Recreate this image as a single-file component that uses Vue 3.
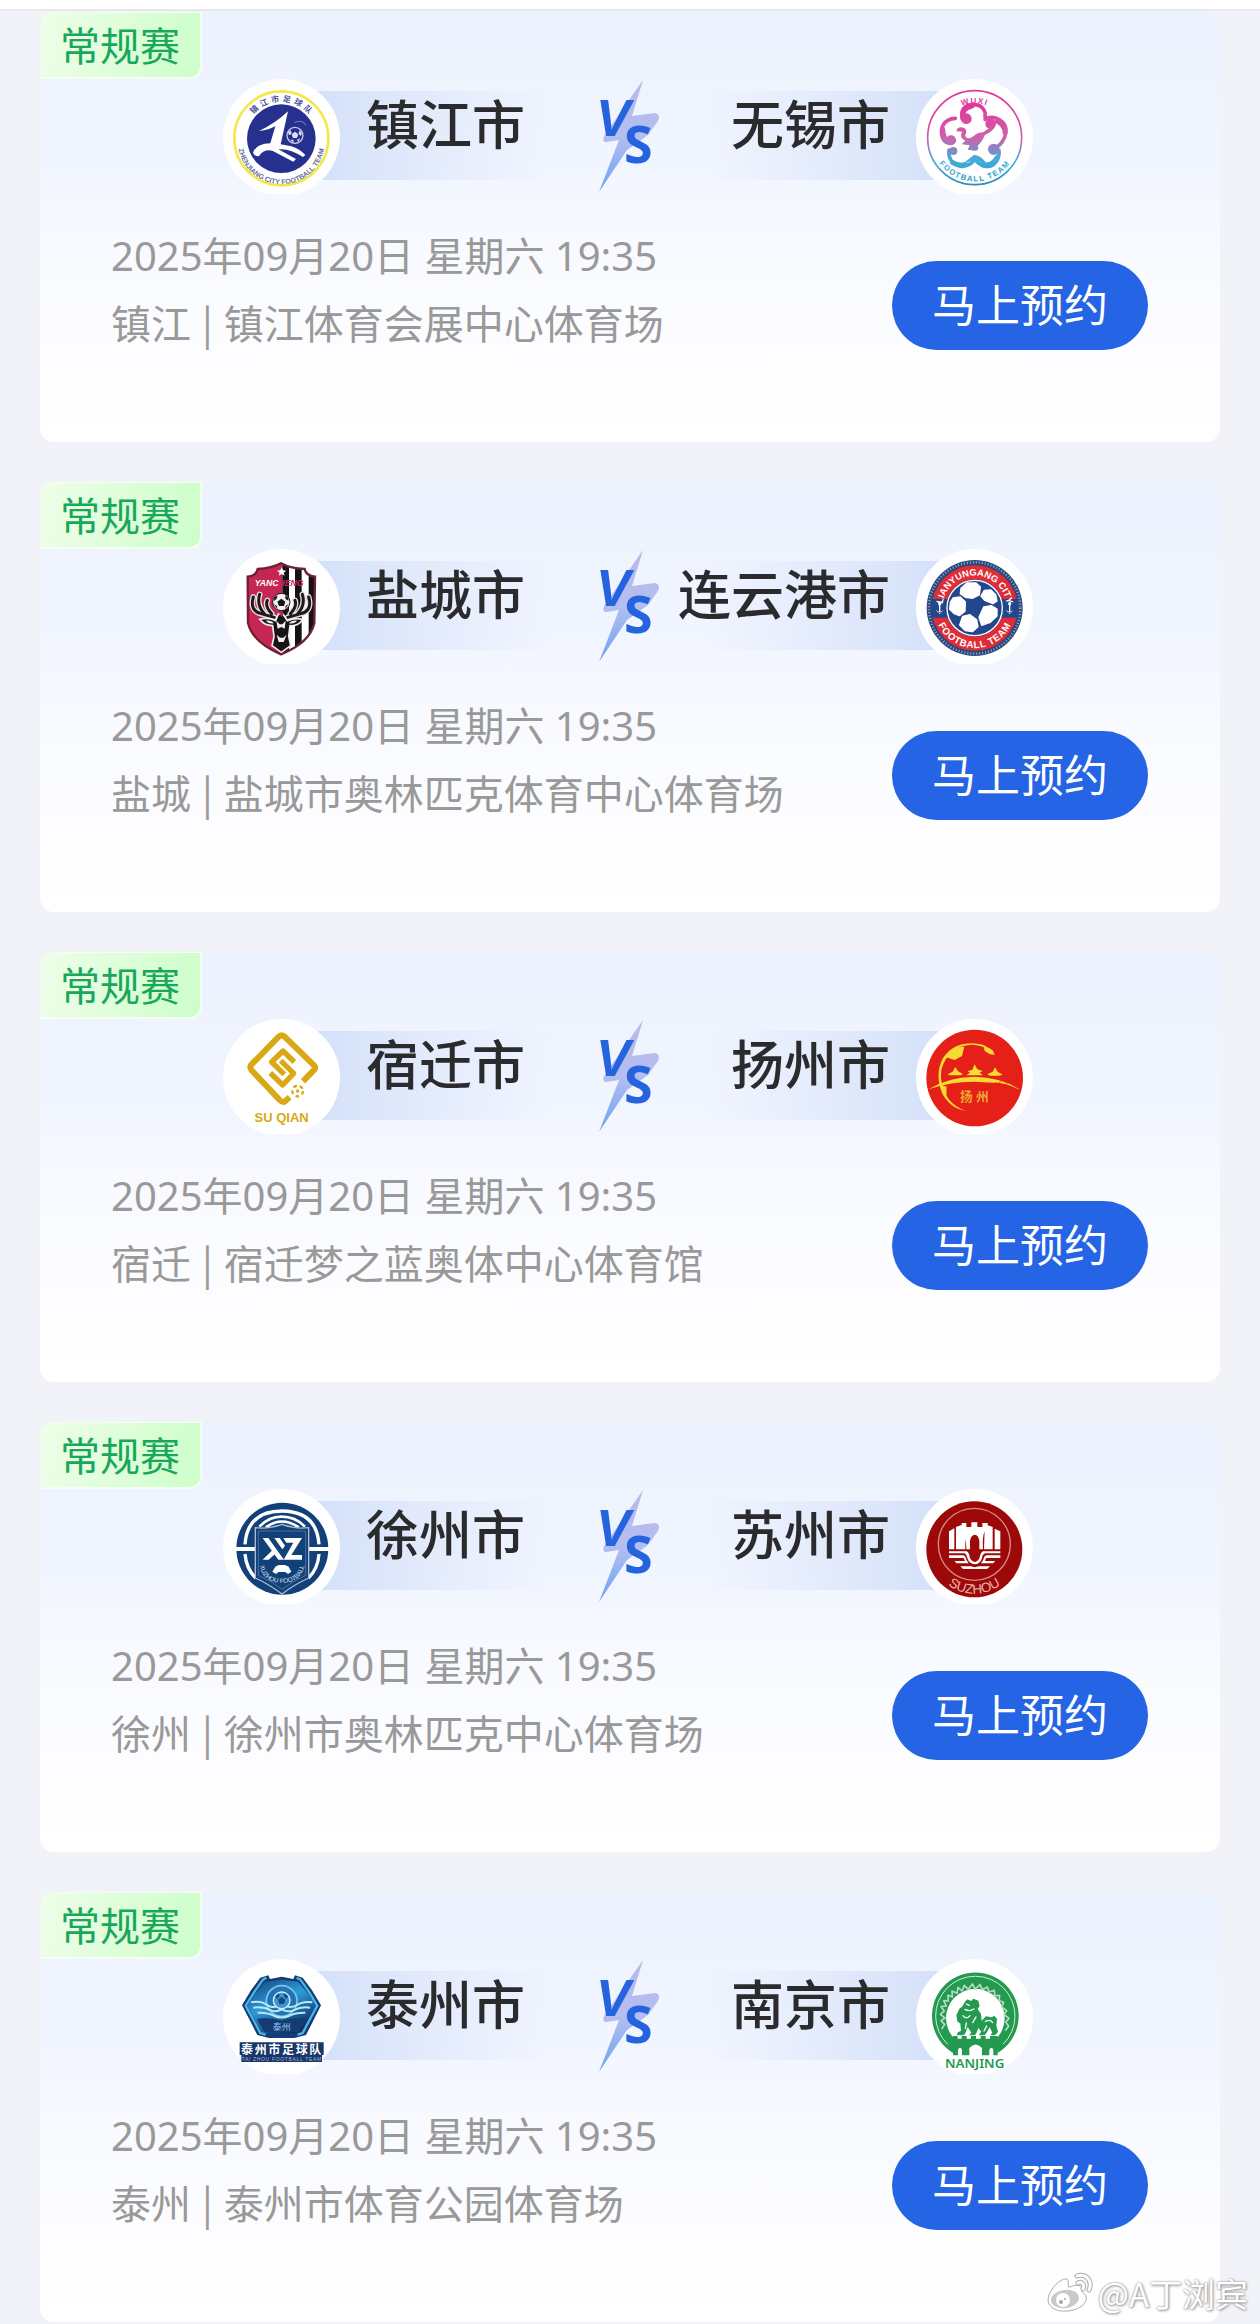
<template>
  <div class="page">
    <header class="top-bar"></header>
    <main class="match-list">
      <article v-for="match in matches" :key="match.home.id" class="match-card">
        <span class="tag">常规赛</span>

        <div class="teams">
          <template v-for="side in ['home', 'away']" :key="side">
            <svg v-if="side === 'away'" class="versus" viewBox="0 0 66 114" role="img" aria-label="VS">
              <defs>
                <linearGradient :id="'bolt-' + match.home.id" x1="0" y1="0" x2="0" y2="1">
                  <stop offset="0" stop-color="#b9b8e8" />
                  <stop offset="0.5" stop-color="#b4bff0" />
                  <stop offset="1" stop-color="#6ba2f5" />
                </linearGradient>
              </defs>
              <path :fill="`url(#bolt-${match.home.id})`" d="M48 1 37 37 60 34Q66 35 63 42L53 56 32 71 4 113 24 61 11 63Q7 63 9 57Z" />
              <text x="1" y="57" class="versus-letter slanted">V</text>
              <text x="29" y="84" class="versus-letter">S</text>
            </svg>

            <div class="team" :class="side">
              <svg class="emblem" :viewBox="side === 'home' ? '24 24 351 345' : '33 24 351 345'" aria-hidden="true">
                <circle :cx="side === 'home' ? 199.5 : 208.5" cy="199.5" r="175.5" fill="#fff" />

                <g v-if="match[side].id === 'zhenjiang'">
                  <circle cx="199" cy="202" r="141" fill="#fff" stroke="#f3e84a" stroke-width="8" />
                  <circle cx="199" cy="203" r="103" fill="#26318f" />
                  <path fill="#fff" d="M132 180Q180 158 219 121L197 220 229 226Q254 234 271 252L264 258Q223 231 190 235L243 264 235 272 172 239Q145 234 132 256 118 256 114 245 123 218 166 217L181 165Q163 177 132 180Z" />
                  <circle cx="240" cy="193" r="24" fill="none" stroke="#c7cae8" stroke-width="4" />
                  <path fill="#dfe1f3" d="M240 182 250 190 246 201H234L230 190ZM219 184 227 178 230 188 222 193ZM253 178 261 186 258 195 251 188ZM226 206 235 206 236 215ZM246 206 256 202 249 213Z" />
                  <path d="M238 154Q265 145 273 163" fill="none" stroke="#7980bd" stroke-width="3" />
                  <path id="zj-top" d="M89 202A110 110 0 0 1 309 202" fill="none" />
                  <path id="zj-bottom" d="M70 186A131 131 0 1 0 328 186" fill="none" />
                  <text font-size="24" font-weight="700" fill="#4a5199" letter-spacing="9" text-anchor="middle"><textPath href="#zj-top" startOffset="51%">镇江市足球队</textPath></text>
                  <text font-size="21" font-weight="700" fill="#6a70a3" text-anchor="middle"><textPath href="#zj-bottom" startOffset="50%">ZHENJIANG CITY FOOTBALL TEAM</textPath></text>
                </g>

                <g v-else-if="match[side].id === 'wuxi'" fill="none" stroke="url(#wx-fill)" stroke-linecap="round">
                  <defs>
                    <linearGradient id="wx-fill" gradientUnits="userSpaceOnUse" x1="0" y1="60" x2="0" y2="340">
                      <stop offset="0.15" stop-color="#e0389b" />
                      <stop offset="0.5" stop-color="#cf61ac" />
                      <stop offset="0.75" stop-color="#3eaedd" />
                      <stop offset="1" stop-color="#2b8fb8" />
                    </linearGradient>
                  </defs>
                  <circle cx="209" cy="200" r="141" stroke-width="5" />
                  <path stroke-width="11" d="M174 145C163 111 188 98 207 101 231 101 243 119 240 136M240 145C268 129 307 151 303 184 300 205 286 227 263 233M151 142C117 143 103 172 112 199 118 216 139 223 148 210M132 237C128 270 151 284 171 286 190 285 205 276 211 260M282 238C285 266 266 289 242 286 228 284 217 276 208 262" />
                  <path stroke-width="15" d="M173 142Q168 111 201 105M277 151Q300 163 300 184M113 175Q115 204 130 211M143 275Q161 286 181 281M234 282Q264 285 276 260" />
                  <g stroke="none" fill="url(#wx-fill)">
                    <circle cx="184" cy="143" r="16" /><circle cx="257" cy="158" r="16" /><circle cx="138" cy="208" r="15" /><circle cx="266" cy="235" r="17" /><circle cx="145" cy="240" r="12" />
                    <path d="M154 181Q158 163 178 171 189 180 180 194 188 209 205 196 220 183 235 184 249 169 269 170 258 184 239 193 231 214 218 224 225 239 208 239L188 236 194 223 170 220 181 209Q161 199 171 182Z" />
                    <path d="M174 278Q196 260 207 252 228 251 248 282 227 277 211 264 193 274 174 278Z" />
                  </g>
                  <path id="wx-top" d="M106 200A103 103 0 0 1 312 200" stroke="none" />
                  <path id="wx-bottom" d="M78 200A131 131 0 0 0 340 200" stroke="none" />
                  <g fill="url(#wx-fill)" stroke="none" text-anchor="middle" font-weight="700">
                    <text font-size="24" letter-spacing="4"><textPath href="#wx-top" startOffset="50%">WUXI</textPath></text>
                    <text font-size="23" letter-spacing="4"><textPath href="#wx-bottom" startOffset="50%">FOOTBALL TEAM</textPath></text>
                  </g>
                </g>

                <g v-else-if="match[side].id === 'yancheng'">
                  <defs>
                    <clipPath id="yc-shield"><path d="M98 107Q124 105 128 84 170 82 198 67 228 83 269 84 273 105 300 107L298 247Q284 306 198 340 113 304 99 246Z" /></clipPath>
                  </defs>
                  <g clip-path="url(#yc-shield)">
                    <path fill="#c52653" d="M90 60H202V345H90Z" />
                    <path fill="#151215" d="M202 60H305V345H202Z" />
                    <path fill="#fff" d="M222 60H240V345H222ZM260 60H281V345H260Z" />
                  </g>
                  <path fill="none" stroke="#702034" stroke-width="7" d="M98 107Q124 105 128 84 170 82 198 67 228 83 269 84 273 105 300 107L298 247Q284 306 198 340 113 304 99 246Z" />
                  <path fill="#fff" d="M200 79 204 88 214 89 206 95 209 104 200 99 191 104 194 95 186 89 196 88Z" />
                  <text x="119" y="134" font-size="26" font-style="italic" font-weight="700" fill="#fff">YANC<tspan fill="#c52653">HENG</tspan></text>
                  <g fill="none" stroke-linecap="round" stroke-linejoin="round">
                    <path stroke="#e6e0e2" stroke-width="17" d="M115 168Q103 209 138 218L178 229M134 160Q124 192 148 218M157 178Q149 196 170 218M281 168Q293 209 258 218L218 229M262 160Q272 192 248 218M240 178Q247 196 226 218" />
                    <path stroke="#1d191c" stroke-width="9" d="M115 168Q103 209 138 218L178 229M134 160Q124 192 148 218M157 178Q149 196 170 218M281 168Q293 209 258 218L218 229M262 160Q272 192 248 218M240 178Q247 196 226 218" />
                  </g>
                  <path fill="#171417" stroke="#eee" stroke-width="5" d="M134 235Q160 228 182 239L190 219 204 219 217 239Q244 228 263 236 249 256 225 254L221 286 227 314 199 334 171 314 177 287 173 254Q148 254 134 235Z" />
                  <path fill="#eee" d="M152 239Q169 237 176 247 162 250 152 239ZM247 239Q230 237 222 247 237 250 247 239ZM184 239 194 250 202 250 212 239 209 263 199 258 188 263ZM185 281 195 290H205L215 281 206 303H191Z" />
                  <path fill="#c52653" d="M192 216H207L200 228Z" />
                  <circle cx="199" cy="183" r="26" fill="#f4f0f1" stroke="#171417" stroke-width="3" />
                  <path fill="#171417" d="M199 173 211 182 207 195H192L187 182ZM178 168 188 164 185 173 177 180ZM211 163 221 171 220 179 211 173ZM176 189 186 195 187 203ZM221 188 212 195 211 204Z" />
                </g>

                <g v-else-if="match[side].id === 'lianyungang'">
                  <circle cx="209" cy="201" r="144" fill="#27477e" />
                  <circle cx="209" cy="201" r="137" fill="none" stroke="#92a6c0" stroke-width="8" stroke-dasharray="3 6" />
                  <circle cx="209" cy="201" r="107" fill="none" stroke="#e02c36" stroke-width="43" />
                  <path fill="#23478c" d="M80 174H130V230H80ZM288 174H338V230H288Z" />
                  <circle cx="209" cy="201" r="83" fill="#23478c" stroke="#fff" stroke-width="4" />
                  <g fill="#fff">
                    <path d="M168 142 186 126H213L226 138 223 162 202 172 181 169 166 158ZM238 148 258 147 272 161 276 180 264 188 239 178 228 165ZM236 198 259 194 276 204 276 225 256 244 230 253 222 229ZM173 226 195 221 215 236 219 257 202 272 181 269 164 252ZM144 171 166 168 181 183 180 211 163 224 148 218 134 205 136 184Z" stroke="#fff" stroke-width="4" stroke-linejoin="round" />
                    <path d="M102 182H106V218H102ZM92 206Q103 225 116 206L110 211 104 213 98 211ZM312 182H316V218H312ZM302 206Q313 225 326 206L320 211 314 213 308 211Z" />
                    <circle cx="104" cy="188" r="5" /><circle cx="314" cy="188" r="5" />
                  </g>
                  <path id="lyg-top" d="M112 201A97 97 0 0 1 306 201" fill="none" />
                  <path id="lyg-bottom" d="M89 201A120 120 0 0 0 329 201" fill="none" />
                  <g fill="#fff" font-weight="700" text-anchor="middle">
                    <text font-size="28"><textPath href="#lyg-top" startOffset="50%">LIANYUNGANG CITY</textPath></text>
                    <text font-size="29" letter-spacing="2"><textPath href="#lyg-bottom" startOffset="50%">FOOTBALL TEAM</textPath></text>
                  </g>
                </g>

                <g v-else-if="match[side].id === 'suqian'" fill="none" stroke="#d8a914" stroke-width="18">
                  <path stroke-linejoin="round" d="M264 211 298 176Q303 170 298 164L208 76Q200 70 192 76L109 161Q103 169 109 177L194 267Q203 276 211 270L224 259" />
                  <path stroke-width="16" stroke-linejoin="round" d="M238 153 204 120 170 153 208 190M166 186 203 222 236 187 197 149" />
                  <circle cx="248" cy="240" r="16" stroke-width="7" stroke-dasharray="11 9" />
                  <circle cx="248" cy="240" r="5" fill="#d8a914" stroke="none" />
                  <text x="200" y="333" font-size="39" font-weight="700" text-anchor="middle" fill="#d8a914" stroke="none">SU QIAN</text>
                </g>

                <g v-else-if="match[side].id === 'yangzhou'">
                  <circle cx="209" cy="201" r="145" fill="#e52019" />
                  <g fill="#f6dc32">
                    <path d="M269 131Q239 100 199 101 128 106 109 177 102 221 130 263 150 289 183 299 137 293 112 248 89 194 112 145 141 96 203 97 231 99 241 105L263 118Z" />
                    <path d="M127 128Q150 107 178 107L171 135 149 147 124 139ZM236 105 255 113 270 131 255 130 239 120ZM107 221 125 227 124 254 109 237Z" />
                    <path d="M71 235Q126 199 207 197 292 199 346 237 292 212 264 215L209 212Q129 213 71 235Z" />
                    <path d="M128 190 143 182 151 168 159 181 174 189 166 193H135ZM187 181 202 176 209 160 217 175 233 180 224 185 234 193H184L195 185ZM247 190 263 182 270 169 278 182 293 191 282 194H255Z" />
                  </g>
                  <path fill="none" stroke="#e52019" stroke-width="2" d="M277 220 289 208M296 225 310 214" />
                  <text x="213" y="269" class="brush" font-size="38" font-weight="700" letter-spacing="10" text-anchor="middle" fill="#f0a62f">扬州</text>
                </g>

                <g v-else-if="match[side].id === 'xuzhou'">
                  <circle cx="202" cy="203" r="138" fill="#124179" />
                  <g fill="none" stroke="#fff">
                    <path stroke-width="10" d="M90 190Q97 91 201 90 305 91 312 190M90 219Q94 264 122 291M312 219Q309 264 280 291" />
                    <path stroke-width="8" d="M133 137Q164 106 201 107 240 107 270 137M153 139Q200 104 251 139" />
                    <path stroke-width="12" d="M62 204H122M280 204H342" />
                  </g>
                  <path fill="#124179" stroke="#adbdd1" stroke-width="4" d="M121 140Q161 145 201 130 241 145 281 140V291Q239 310 201 339 161 309 121 291Z" />
                  <path fill="none" stroke="#6a88ad" stroke-width="2" d="M130 150H272V283Q232 301 201 325 169 300 130 283Z" />
                  <path fill="#fff" d="M143 171H160L207 236H190ZM178 202 187 213 161 236H143ZM178 171H194L210 194 202 205ZM205 171H261L229 222H261V236H206L235 185H214Z" />
                  <path fill="#fff" d="M181 257 191 252H210L221 257 229 272 219 279 211 273H191L183 279 172 272Z" />
                  <path id="xz-name" d="M133 245Q139 305 201 306 263 305 269 245" fill="none" />
                  <text font-size="19" fill="#dce4ee" text-anchor="middle"><textPath href="#xz-name" startOffset="50%">XUZHOU FOOTBALL</textPath></text>
                  <path fill="#fff" d="M154 342 201 356 250 342 242 370H160Z" />
                </g>

                <g v-else-if="match[side].id === 'suzhou'">
                  <circle cx="208" cy="205" r="144" fill="#9d0808" />
                  <circle cx="208" cy="190" r="108" fill="none" stroke="#d98b8b" stroke-width="4" />
                  <g fill="#fff">
                    <path d="M132 151 148 142V205H132ZM153 138 169 132 173 143 181 139V205H153ZM170 126H184V138H199V124H217V138H232V126H248V153H238Q232 166 234 205H223V181Q221 162 209 161 196 164 195 181V205H184Q185 170 170 153ZM239 143 246 132 263 138V205H237ZM269 143 286 151V205H269Z" />
                    <path d="M132 211H185Q193 215 194 229 199 242 210 243 221 240 224 229 227 214 234 211H286V217H240Q232 220 231 231 226 249 210 250 192 248 187 231 184 219 179 217H132Z" />
                    <path d="M132 223H175Q182 225 184 236L191 247H155L148 240H180L176 231H132ZM286 223H244Q237 225 235 236L228 247H264L271 240H240L243 231H286ZM166 256H197Q210 261 222 256H255L246 264H174Z" />
                  </g>
                  <path id="sz-name" d="M75 205A133 133 0 0 0 341 205" fill="none" />
                  <text font-size="40" fill="#edb7b0" text-anchor="middle"><textPath href="#sz-name" startOffset="50%">SUZHOU</textPath></text>
                </g>

                <g v-else-if="match[side].id === 'taizhou'">
                  <defs>
                    <linearGradient id="tz-fill" x1="0" y1="0" x2="0.6" y2="1">
                      <stop offset="0" stop-color="#123e75" />
                      <stop offset="0.5" stop-color="#2d9bd5" />
                      <stop offset="1" stop-color="#102f69" />
                    </linearGradient>
                  </defs>
                  <path fill="#143b78" d="M136 80 160 73 165 84 200 77 235 84 240 73 263 80 291 118 318 163 294 211 273 252 238 261H162L127 252 106 211 81 163 108 118Z" />
                  <path fill="url(#tz-fill)" d="M150 92 200 86 249 92 280 128 303 164 279 208 257 247H143L121 208 97 164 120 128Z" />
                  <path fill="none" stroke="#49b5e5" stroke-width="7" d="M154 80 144 86 117 124 92 164 117 210 136 246 152 251M245 80 256 86 283 124 307 164 282 210 263 246 248 251" />
                  <circle cx="200" cy="150" r="46" fill="#2474b5" stroke="#73c8eb" stroke-width="5" />
                  <path fill="none" stroke="#b9e9f6" stroke-width="6" d="M108 154Q139 148 158 163 176 174 200 161 225 174 244 163 265 149 292 154M115 170Q146 166 168 178 183 185 200 175 220 185 235 178 260 166 285 170M128 185Q161 184 178 195 200 204 221 195 243 184 271 185" />
                  <circle cx="200" cy="148" r="25" fill="#3b96cf" stroke="#d2f1fa" stroke-width="4" />
                  <path fill="#174b83" d="M200 137 211 146 207 159H193L189 146ZM181 136 192 127 194 134 186 145ZM208 127 220 136 214 145 206 134Z" />
                  <path fill="#153b72" d="M125 204Q162 198 200 209 238 198 275 204L251 243H149Z" />
                  <text x="200" y="236" font-size="27" text-anchor="middle" fill="#8fc9e5">泰州</text>
                  <path fill="#173669" d="M74 274H326V312H321V333H79V312H74Z" />
                  <text x="201" y="309" font-size="36" font-weight="700" letter-spacing="5" text-anchor="middle" fill="#fff">泰州市足球队</text>
                  <text x="200" y="329" font-size="15" letter-spacing="2" text-anchor="middle" fill="#aabad0">TAI ZHOU FOOTBALL TEAM</text>
                </g>

                <g v-else fill="#239a50">
                  <path fill-rule="evenodd" d="M144 306A130 130 0 1 1 278 306L272 265A88 88 0 1 0 150 265Z" />
                  <path fill="none" stroke="#d2ead7" stroke-width="3" d="M128 280A119 119 0 1 1 294 280" />
                  <path fill="none" stroke="#b5dcbf" stroke-width="5" stroke-linecap="round" stroke-linejoin="round" d="M111 233 119 220 108 209 120 201 106 190 118 180 108 167 124 165 116 149 130 150 129 133 142 138 141 120 156 127 159 109 171 120 178 103 190 115 202 99 211 114 225 101 232 116 247 108 252 123 268 118 269 134 284 134 282 149 296 154 290 168 305 179 297 190 312 202 302 213 311 226 302 237" />
                  <path d="M181 151 187 145 199 150 205 143 220 149 224 165 218 173 228 189 230 209 243 196 260 199 268 194 276 204 274 224 279 243 270 253H256L262 245 254 229 243 248 238 253H221L229 242 220 231 213 249 207 253H192L199 245 188 228 180 249 174 253H155L159 244 168 239 166 218 157 211 154 193 163 173 171 167Z" />
                  <path fill="none" stroke="#fff" stroke-width="4" stroke-linecap="round" d="M184 159 193 163M180 175Q194 183 207 174M174 194Q184 207 195 194M213 198 203 215M241 211Q258 204 263 215M184 216 181 232M245 225 237 240" />
                  <path d="M144 255H158V263H170V255H185V263H198V255H213V263H227V255H242V263H255V255H278V313H265V296Q260 284 253 296V313H231V291Q212 270 193 291V313H171V296Q165 284 159 296V313H144Z" />
                  <text x="209" y="350" class="nanjing-name" text-anchor="middle">NANJING</text>
                </g>
              </svg>
              <span class="team-name">{{ match[side].name }}</span>
            </div>
          </template>
        </div>

        <div class="info">
          <div class="details">
            <time class="date" datetime="2025-09-20T19:35">{{ match.time }}</time>
            <p class="place">
              <span>{{ match.city }}</span><span>|</span><span>{{ match.venue }}</span>
            </p>
          </div>
          <button type="button" class="reserve">马上预约</button>
        </div>
      </article>
    </main>

    <div class="watermark">
      <svg viewBox="0 0 48 42" aria-hidden="true">
        <path fill="#fff" stroke="#aaa" d="M22 8C19 4 7 12 3 23-1 34 9 40 21 39 34 38 42 31 40 24 39 21 35 21 36 18 37 13 30 12 24 15 21 16 23 12 22 8Z" />
        <ellipse cx="19" cy="27" rx="14" ry="9" fill="#c9c9cb" transform="rotate(-8 19 27)" />
        <circle cx="17" cy="28" r="7" fill="#fff" />
        <circle cx="15" cy="30" r="2" fill="#aaa" /><circle cx="19" cy="27" r="1" fill="#aaa" />
        <path fill="none" stroke="#aaa" stroke-width="5" stroke-linecap="round" d="M31 4C40 1 47 9 43 18M32 11C36 9 39 13 37 17" />
        <path fill="none" stroke="#fff" stroke-width="3" stroke-linecap="round" d="M31 4C40 1 47 9 43 18M32 11C36 9 39 13 37 17" />
      </svg>
      <span>@A丁浏宾</span>
    </div>
  </div>
</template>

<script setup>
const time = '2025年09月20日 星期六 19:35'

const matches = [
  {
    home: { id: 'zhenjiang', name: '镇江市' },
    away: { id: 'wuxi', name: '无锡市' },
    time,
    city: '镇江',
    venue: '镇江体育会展中心体育场',
  },
  {
    home: { id: 'yancheng', name: '盐城市' },
    away: { id: 'lianyungang', name: '连云港市' },
    time,
    city: '盐城',
    venue: '盐城市奥林匹克体育中心体育场',
  },
  {
    home: { id: 'suqian', name: '宿迁市' },
    away: { id: 'yangzhou', name: '扬州市' },
    time,
    city: '宿迁',
    venue: '宿迁梦之蓝奥体中心体育馆',
  },
  {
    home: { id: 'xuzhou', name: '徐州市' },
    away: { id: 'suzhou', name: '苏州市' },
    time,
    city: '徐州',
    venue: '徐州市奥林匹克中心体育场',
  },
  {
    home: { id: 'taizhou', name: '泰州市' },
    away: { id: 'nanjing', name: '南京市' },
    time,
    city: '泰州',
    venue: '泰州市体育公园体育场',
  },
]
</script>

<style>
body {
  background: #f2f3f8;
}
</style>

<style scoped>
.page {
  position: relative;
  font-family: "Noto Sans CJK SC", sans-serif;
  color: #2b2b2d;
}
.top-bar {
  height: 9px;
  background: #fff;
  border-bottom: 2px solid #e7e7ec;
}
.match-list {
  display: flex;
  flex-direction: column;
  gap: 40px;
  padding: 1px 40px 2px;
}
.match-card {
  padding-bottom: 87px;
  border-radius: 14px;
  background: linear-gradient(#ecf2fe, #f1f5ff 35%, #f8faff 55%, #fdfdff 80%, #fff);
  overflow: hidden;
}
.tag {
  display: block;
  box-sizing: border-box;
  width: fit-content;
  height: 67px;
  padding: 0 20px;
  border: solid #f4fff4;
  border-width: 1px 2px 2px 0;
  border-radius: 12px 0 12px 0;
  background: linear-gradient(100deg, #effee9, #cdfec9);
  color: #18a75b;
  font-size: 40px;
  line-height: 62px;
}
.teams {
  display: flex;
  padding: 0 187px 0 183px;
}
.team {
  flex: 1;
  display: flex;
  align-items: flex-start;
}
.team.away {
  flex-direction: row-reverse;
}
.emblem {
  position: relative;
  flex: none;
  width: 117px;
  height: 115px;
  font-family: "Liberation Sans", "Noto Sans CJK SC", sans-serif;
}
.brush {
  font-family: "Liberation Serif", "Noto Sans CJK SC", serif;
}
.nanjing-name {
  font-family: "Noto Sans", sans-serif;
  font-size: 40px;
  font-weight: 600;
}
.team-name {
  flex: 1;
  box-sizing: border-box;
  height: 89px;
  margin-top: 12px;
  font-size: 53px;
  font-weight: 500;
  line-height: 62px;
  white-space: nowrap;
}
.home .team-name {
  margin-left: -36px;
  padding-left: 62px;
  background: linear-gradient(to right, #d3e0fa, #e2eafb 40%, transparent 85%);
}
.away .team-name {
  margin-right: -36px;
  padding-right: 62px;
  background: linear-gradient(to left, #d3e0fa, #e2eafb 40%, transparent 85%);
  text-align: right;
}
.versus {
  flex: none;
  width: 66px;
  height: 114px;
}
.versus-letter {
  fill: #2563df;
  font-family: "Noto Sans", sans-serif;
  font-size: 52px;
  font-weight: 700;
}
.versus-letter.slanted {
  font-family: "Liberation Sans", sans-serif;
  font-style: italic;
}
.info {
  display: flex;
  align-items: center;
  justify-content: space-between;
  margin-top: 29px;
  padding: 0 72px 0 71px;
}
.details {
  color: #999;
  font-size: 40px;
  line-height: 66px;
}
.date {
  display: block;
  font-family: "Noto Sans", "Noto Sans CJK SC", sans-serif;
}
.place {
  display: flex;
  gap: 11px;
  margin: 0;
}
.reserve {
  height: 89px;
  margin-top: 32px;
  padding: 0 40px 4px;
  border: 0;
  border-radius: 45px;
  background: #2564e4;
  color: #fff;
  font-family: inherit;
  font-size: 44px;
  line-height: 64px;
  white-space: nowrap;
  cursor: pointer;
}
.watermark {
  position: absolute;
  right: 12px;
  bottom: 9px;
  display: flex;
  align-items: center;
  gap: 4px;
  color: #fff;
  font-size: 33px;
  line-height: 44px;
  text-shadow: 0 0 2px #888, 1px 1px 3px #999;
}
.watermark svg {
  width: 48px;
  height: 42px;
}
</style>
